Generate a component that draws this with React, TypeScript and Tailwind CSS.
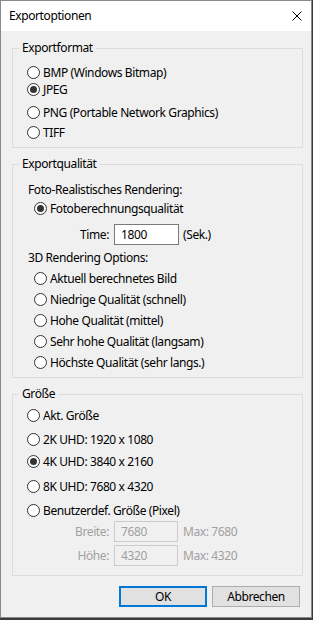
import React from "react";

function Radio({ label, checked = false, className = "" }: { label: string; checked?: boolean; className?: string }) {
    return (
        <div className={`flex items-center gap-[3px] h-[17px] ${className}`}>
            <span className="flex items-center justify-center w-[13px] h-[13px] rounded-full border border-[#333333] bg-white shrink-0">
                {checked && <span className="w-[7px] h-[7px] rounded-full bg-[#333333]"></span>}
            </span>
            <span className="leading-[17px]">{label}</span>
        </div>
    );
}

function Group({ title, className = "", children }: { title: string; className?: string; children: React.ReactNode }) {
    return (
        <fieldset className={`border border-[#dcdcdc] p-0 m-0 ${className}`}>
            <legend className="ml-[6px] px-[3px] leading-[16px]">{title}</legend>
            {children}
        </fieldset>
    );
}

export default function App() {
    return (
        <div className="w-[313px] h-[620px] bg-[#3b3b3b] text-[12px] tracking-[-0.4px] text-black" style={{ fontFamily: "'Segoe UI', 'Noto Sans', sans-serif" }}>
            <div className="flex flex-col w-[312px] h-[618px] border border-[#8a8a8a] bg-[#f0f0f0]">
                <div className="flex items-center justify-between h-[30px] bg-white pl-[8px] pr-[9px]">
                    <span className="leading-[16px]">Exportoptionen</span>
                    <svg width="10" height="10" viewBox="0 0 10 10" className="shrink-0">
                        <path d="M0.5 0.5 L9.5 9.5 M9.5 0.5 L0.5 9.5" stroke="#000" strokeWidth="1" fill="none" />
                    </svg>
                </div>
                <div className="flex flex-col pl-[11px] pr-[8px] pt-[9px]">
                    <Group title="Exportformat">
                        <div className="flex flex-col pt-[8px] pb-[6px] pl-[14px]">
                            <Radio label="BMP (Windows Bitmap)" />
                            <Radio label="JPEG" checked />
                            <Radio label="PNG (Portable Network Graphics)" className="mt-[6px]" />
                            <Radio label="TIFF" className="mt-[3px]" />
                        </div>
                    </Group>

                    <Group title="Exportqualität" className="mt-[8px]">
                        <div className="flex flex-col pt-[10px] pb-[6px] pl-[15px]">
                            <div className="h-[16px] leading-[16px]">Foto-Realistisches Rendering:</div>
                            <Radio label="Fotoberechnungsqualität" checked className="mt-[2px] ml-[6px]" />
                            <div className="flex items-center mt-[7px] h-[21px]">
                                <span className="w-[81px] text-right">Time:</span>
                                <div className="ml-[5px] w-[65px] h-[21px] border border-[#7a7a7a] bg-white pl-[6px] leading-[19px]">1800</div>
                                <span className="ml-[4px]">(Sek.)</span>
                            </div>
                            <div className="h-[16px] leading-[16px] mt-[5px]">3D Rendering Options:</div>
                            <div className="flex flex-col gap-[4px] mt-[4px] ml-[6px]">
                                <Radio label="Aktuell berechnetes Bild" />
                                <Radio label="Niedrige Qualität (schnell)" />
                                <Radio label="Hohe Qualität (mittel)" />
                                <Radio label="Sehr hohe Qualität (langsam)" />
                                <Radio label="Höchste Qualität (sehr langs.)" />
                            </div>
                        </div>
                    </Group>

                    <Group title="Größe" className="mt-[8px]">
                        <div className="flex flex-col pt-[5px] pb-[9px] pl-[14px]">
                            <Radio label="Akt. Größe" />
                            <Radio label="2K UHD: 1920 x 1080" className="mt-[7px]" />
                            <Radio label="4K UHD: 3840 x 2160" checked className="mt-[5px]" />
                            <Radio label="8K UHD: 7680 x 4320" className="mt-[8px]" />
                            <Radio label="Benutzerdef. Größe (Pixel)" className="mt-[7px]" />
                            <div className="flex items-center mt-[2px] h-[21px] text-[#a0a0a0]">
                                <span className="w-[82px] text-right">Breite:</span>
                                <div className="ml-[5px] w-[64px] h-[21px] border border-[#cccccc] pl-[6px] leading-[19px]">7680</div>
                                <span className="ml-[5px]">Max: 7680</span>
                            </div>
                            <div className="flex items-center mt-[3px] h-[21px] text-[#a0a0a0]">
                                <span className="w-[82px] text-right">Höhe:</span>
                                <div className="ml-[5px] w-[64px] h-[21px] border border-[#cccccc] pl-[6px] leading-[19px]">4320</div>
                                <span className="ml-[5px]">Max: 4320</span>
                            </div>
                        </div>
                    </Group>

                    <div className="flex justify-end gap-[5px] mt-[10px] mr-[3px]">
                        <button className="w-[88px] h-[21px] border-2 border-[#0078d7] bg-[#e1e1e1] leading-[17px]">OK</button>
                        <button className="w-[88px] h-[21px] border border-[#adadad] bg-[#e1e1e1] leading-[19px]">Abbrechen</button>
                    </div>
                </div>
            </div>
        </div>
    );
}
